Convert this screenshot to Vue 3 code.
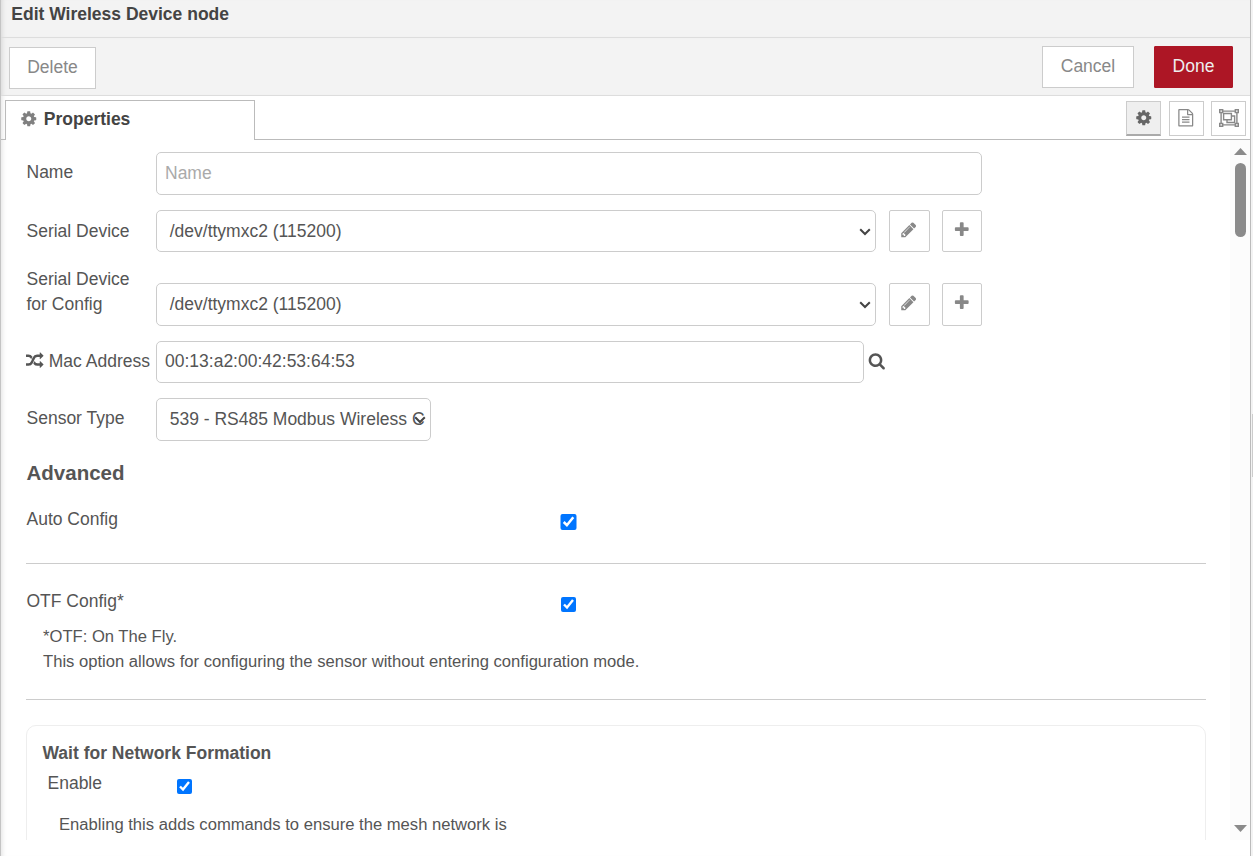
<script setup>
import { ref } from 'vue'

const paths = {
  cog: 'M1152 896q0-106-75-181t-181-75-181 75-75 181 75 181 181 75 181-75 75-181zm512-109v222q0 12-8 23t-20 13l-185 28q-19 54-39 91 35 50 107 138 10 12 10 25t-9 23q-27 37-99 108t-94 71q-12 0-26-9l-138-108q-44 23-91 38-16 136-29 186-7 28-36 28h-222q-14 0-24.5-8.5t-11.5-21.5l-28-184q-49-16-90-37l-141 107q-10 9-25 9-14 0-25-11-126-114-165-168-7-10-7-23 0-12 8-23 15-21 51-66.5t54-70.5q-27-50-41-99l-183-27q-13-2-21-12.5t-8-23.5v-222q0-12 8-23t19-13l186-28q14-46 39-92-40-57-107-138-10-12-10-24 0-10 9-23 26-36 98.5-107.5t94.500-71.500q13 0 26 10l138 107q44-23 91-38 16-136 29-186 7-28 36-28h222q14 0 24.500 8.500t11.500 21.500l28 184q49 16 90 37l142-107q9-9 24-9 13 0 25 10 129 119 165 170 7 8 7 22 0 12-8 23-15 21-51 66.500t-54 70.500q26 50 41 98l183 28q13 2 21 12.500t8 23.500z',
  pencil: 'M491 1536l91-91-235-235-91 91v107h128v128h107zm523-928q0-22-22-22-10 0-17 7l-542 542q-7 7-7 17 0 22 22 22 10 0 17-7l542-542q7-7 7-17zm-54-192l416 416-832 832h-416v-416zm683 96q0 53-37 90l-166 166-416-416 166-165q36-38 90-38 53 0 91 38l235 234q37 39 37 91z',
  plus: 'M1600 736v192q0 40-28 68t-68 28h-416v416q0 40-28 68t-68 28h-192q-40 0-68-28t-28-68v-416h-416q-40 0-68-28t-28-68v-192q0-40 28-68t68-28h416v-416q0-40 28-68t68-28h192q40 0 68 28t28 68v416h416q40 0 68 28t28 68z',
  search: 'M1216 832q0-185-131.5-316.5t-316.5-131.5-316.5 131.5-131.5 316.5 131.5 316.5 316.5 131.5 316.5-131.5 131.5-316.5zm512 832q0 52-38 90t-90 38q-54 0-90-38l-343-342q-179 124-399 124-143 0-273.5-55.5t-225-150-150-225-55.500-273.500 55.500-273.500 150-225 225-150 273.500-55.500 273.500 55.500 225 150 150 225 55.500 273.500q0 220-124 399l343 343q37 37 37 90z',
  random: 'M666 481q-60 92-137 273-22-45-37-72.5t-40.500-63.500-51-56.500-63-35-81.500-14.500h-224q-14 0-23-9t-9-23v-192q0-14 9-23t23-9h224q250 0 410 225zm1126 799q0 14-9 23l-320 320q-9 9-23 9-13 0-22.500-9.500t-9.500-22.500v-192q-32 0-85 .5t-81 1-73-1-71-5-64-10.500-63-18.500-58-28.500-59-40-55-53.500-56-69.500q59-93 136-273 22 45 37 72.500t40.500 63.500 51 56.500 63 35 81.500 14.500h256v-192q0-14 9-23t23-9q12 0 24 10l319 319q9 9 9 23zm0-896q0 14-9 23l-320 320q-9 9-23 9-13 0-22.500-9.500t-9.500-22.500v-192h-256q-48 0-87 15t-69 45-51 61.500-45 77.500q-32 62-78 171-29 66-49.500 111t-54 105-64 100-74 83-90 68.500-106.500 42-128 16.500h-224q-14 0-23-9t-9-23v-192q0-14 9-23t23-9h224q48 0 87-15t69-45 51-61.500 45-77.500q32-62 78-171 29-66 49.500-111t54-105 64-100 74-83 90-68.500 106.500-42 128-16.500h256v-192q0-14 9-23t23-9q12 0 24 10l319 319q9 9 9 23z',
  file: 'M1596 380q28 28 48 76t20 88v1152q0 40-28 68t-68 28h-1344q-40 0-68-28t-28-68v-1600q0-40 28-68t68-28h896q40 0 88 20t76 48zm-444-244v376h376q-10-29-22-41l-313-313q-12-12-41-22zm384 1528v-1024h-416q-40 0-68-28t-28-68v-416h-768v1536h1280zm-1024-864q0-14 9-23t23-9h704q14 0 23 9t9 23v64q0 14-9 23t-23 9h-704q-14 0-23-9t-9-23v-64zm736 224q14 0 23 9t9 23v64q0 14-9 23t-23 9h-704q-14 0-23-9t-9-23v-64q0-14 9-23t23-9h704zm0 256q14 0 23 9t9 23v64q0 14-9 23t-23 9h-704q-14 0-23-9t-9-23v-64q0-14 9-23t23-9h704z'
}

const name = ref('')
const mac = ref('00:13:a2:00:42:53:64:53')
const autoConfig = ref(true)
const otfConfig = ref(true)
const waitForNetwork = ref(true)
const serialRows = [
  { label: ['Serial Device'], value: '/dev/ttymxc2 (115200)', cls: 'serial' },
  { label: ['Serial Device', 'for Config'], value: '/dev/ttymxc2 (115200)', cls: 'serial-config' }
]
</script>

<template>
  <div class="workspace">
    <section class="tray">
      <header class="title">Edit Wireless Device node</header>
      <div class="toolbar">
        <button class="btn delete">Delete</button>
        <button class="btn cancel">Cancel</button>
        <button class="btn done">Done</button>
      </div>
      <div class="tabs">
        <div class="tab-lead"></div>
        <div class="tab">
          <svg class="fa" viewBox="0 0 1792 1792"><path :d="paths.cog" /></svg>
          <span>Properties</span>
        </div>
        <div class="tab-rest">
          <button class="tool active"><svg class="fa" viewBox="0 0 1792 1792"><path :d="paths.cog" /></svg></button>
          <button class="tool"><svg class="fa file-icon" viewBox="0 0 1792 1792"><path :d="paths.file" /></svg></button>
          <button class="tool">
            <svg class="group-icon" viewBox="0 0 20 18" fill="none" stroke="currentColor" stroke-width="1.4">
              <path d="M4 2.100H16M4 15.900H16M2.100 4V14M17.900 4V14" />
              <path d="M.7.700H3.700V3.500H.700ZM16.300.700H19.300V3.500H16.300ZM.700 14.500H3.700V17.300H.700ZM16.300 14.500H19.300V17.300H16.300Z" />
              <path d="M4.600 4.500H12.400V10.800H4.600ZM12.400 7H15.600V13.500H8V10.800" />
            </svg>
          </button>
        </div>
      </div>

      <div class="body">
        <div class="form">
          <div class="row name-row">
            <label>Name</label>
            <input v-model="name" class="text wide" type="text" placeholder="Name" />
          </div>
          <div v-for="row in serialRows" :key="row.cls" class="row" :class="row.cls">
            <label><span v-for="line in row.label" :key="line">{{ line }}</span></label>
            <div class="select">
              <span>{{ row.value }}</span>
              <svg class="chevron" viewBox="0 0 12 8"><path d="M1.200 1.200 6 6 10.800 1.200" /></svg>
            </div>
            <button class="square edit"><svg class="fa" viewBox="0 0 1792 1792"><path :d="paths.pencil" /></svg></button>
            <button class="square add"><svg class="fa" viewBox="0 0 1792 1792"><path :d="paths.plus" /></svg></button>
          </div>
          <div class="row mac-row">
            <label class="with-icon"><svg class="fa" viewBox="0 0 1792 1792"><path :d="paths.random" /></svg>Mac Address</label>
            <input v-model="mac" class="text" type="text" />
            <svg class="fa search" viewBox="0 0 1792 1792"><path :d="paths.search" /></svg>
          </div>
          <div class="row sensor">
            <label>Sensor Type</label>
            <div class="select">
              <span>539 - RS485 Modbus Wireless C</span>
              <svg class="chevron" viewBox="0 0 12 8"><path d="M1.200 1.200 6 6 10.800 1.200" /></svg>
            </div>
          </div>

          <h3>Advanced</h3>
          <div class="option auto">
            <label>Auto Config</label>
            <input v-model="autoConfig" type="checkbox" />
          </div>
          <div class="option otf">
            <label>OTF Config*</label>
            <input v-model="otfConfig" type="checkbox" />
            <p>*OTF: On The Fly.<br />This option allows for configuring the sensor without entering configuration mode.</p>
          </div>
          <div class="card">
            <h4>Wait for Network Formation</h4>
            <div class="enable">
              <label>Enable</label>
              <input v-model="waitForNetwork" type="checkbox" />
            </div>
            <p>Enabling this adds commands to ensure the mesh network is</p>
          </div>
        </div>
        <div class="scrollbar">
          <svg width="13" height="7" viewBox="0 0 13 7"><path d="M6.500 0 13 7H0Z" /></svg>
          <div class="thumb"></div>
          <svg class="down" width="13" height="7" viewBox="0 0 13 7"><path d="M0 0H13L6.500 7Z" /></svg>
        </div>
      </div>
    </section>
    <aside class="edge"><div class="handle"></div></aside>
  </div>
</template>

<style>
body {
  margin: 0;
  overflow: hidden;
}
</style>

<style scoped>
* {
  box-sizing: border-box;
}
.workspace {
  display: flex;
  width: 1253px;
  height: 856px;
  font: 17.5px/25px "Liberation Sans", Arial, sans-serif;
  color: #555;
  background: #fff;
}
button,
input {
  font: inherit;
  margin: 0;
  padding: 0;
}
.fa {
  width: 17.5px;
  height: 17.5px;
  fill: currentColor;
  flex: none;
  display: block;
  overflow: visible;
}
.tray {
  width: 1251px;
  flex: none;
  border-left: 1px solid #c4c4c4;
  border-right: 1px solid #bbb;
  box-shadow: inset 5px 0 5px -4px rgba(0, 0, 0, 0.12);
  overflow: hidden;
}
.edge {
  width: 2px;
  background: #f3f3f3;
  padding-top: 414px;
}
.handle {
  height: 63px;
  margin-left: 1px;
  background: #ccc;
}
.title {
  height: 38px;
  padding: 2px 0 0 10.3px;
  border-bottom: 1px solid #ddd;
  background: #f3f3f3;
  color: #444;
  font-weight: bold;
}
.toolbar {
  height: 58px;
  display: flex;
  align-items: flex-start;
  padding: 8px 17px 0 8px;
  border-bottom: 1px solid #ddd;
  background: #f3f3f3;
}
.btn {
  height: 42px;
  padding-bottom: 2px;
  border: 1px solid #ccc;
  background: #fff;
  color: #888;
}
.delete {
  width: 87px;
  margin: 1px auto 0 0;
}
.cancel {
  width: 92px;
  margin-right: 20px;
}
.done {
  width: 79px;
  border-color: #ad1625;
  border-radius: 1px;
  background: #ad1625;
  color: #eee;
}
.title,
.toolbar {
  box-shadow: inset 5px 0 5px -4px rgba(0, 0, 0, 0.12);
}
.tabs {
  display: flex;
  height: 44px;
}
.tab-lead {
  width: 4px;
  border-bottom: 1px solid #bbb;
}
.tab {
  display: flex;
  align-items: center;
  gap: 6.3px;
  width: 250px;
  margin-top: 4px;
  padding: 0 0 2px 14px;
  border: 1px solid #bbb;
  border-bottom: 0;
  color: #444;
  font-weight: bold;
}
.tab .fa {
  color: #808080;
  margin-bottom: 1px;
}
.tab-rest {
  flex: 1;
  display: flex;
  justify-content: flex-end;
  padding: 5px 4px 0 0;
  border-bottom: 1px solid #bbb;
}
.tool {
  display: flex;
  align-items: center;
  justify-content: center;
  width: 35px;
  height: 35px;
  padding-bottom: 1px;
  border: 1px solid #ccc;
  background: #fff;
  color: #888;
}
.tool + .tool {
  margin-left: 7px;
}
.tool.active {
  margin-right: 1px;
  padding-bottom: 0;
  background: #efefef;
  border-bottom: 2px solid #aaa;
  color: #666;
}
.group-icon {
  width: 20px;
  height: 18px;
  flex: none;
}
.file-icon {
  margin-right: 1px;
}
.body {
  display: flex;
  height: 700px;
  overflow: hidden;
}
.form {
  width: 1205px;
  padding: 12px 0 0 25px;
  flex: none;
}
.row {
  display: flex;
  align-items: flex-end;
  margin-bottom: 15px;
}
.row label {
  width: 130px;
  flex: none;
  align-self: flex-start;
  padding-left: 0.5px;
  white-space: nowrap;
}
.row label span {
  display: block;
}
.name-row label {
  margin-top: 8px;
}
.serial label {
  margin-top: 9px;
}
.mac-row label {
  margin-top: 8px;
}
.sensor label {
  margin-top: 8px;
}
.row .with-icon {
  display: flex;
  gap: 4.8px;
}
.with-icon .fa {
  margin: 3px 0.5px 0 -0.5px;
}
.text,
.select {
  border: 1px solid #ccc;
  border-radius: 5px;
  background: #fff;
  color: #555;
}
.text {
  width: 708px;
  height: 42px;
  padding: 0 8px 2px;
}
.text.wide {
  width: 826px;
  height: 43px;
  padding-bottom: 0;
}
.text::placeholder {
  color: #aaa;
}
.select {
  position: relative;
  width: 720px;
  height: 42px;
  padding: 8px 0 0 12.7px;
}
.select span {
  display: block;
  white-space: nowrap;
}
.chevron {
  position: absolute;
  right: 4px;
  top: 17px;
  width: 12px;
  height: 8px;
  fill: none;
  stroke: #444;
  stroke-width: 2;
}
.serial-config {
  height: 59px;
}
.serial-config .select,
.serial-config .square {
  height: 43px;
}
.square {
  display: flex;
  align-items: center;
  justify-content: center;
  width: 41px;
  height: 42px;
  margin-left: 13px;
  border: 1px solid #ccc;
  border-radius: 2px;
  background: #fff;
  color: #888;
}
.square.add {
  width: 40px;
  margin-left: 12px;
}
.square .fa {
  margin: 0 1px 2px 0;
}
.square.add .fa {
  margin-right: 0;
}
.serial-config .square .fa {
  margin-bottom: 3px;
}
.search {
  align-self: flex-start;
  margin: 11px 0 0 4px;
}
.sensor .select {
  width: 275px;
  height: 43px;
}
h3 {
  margin: 19px 0 22px 0.5px;
  font-size: 20.5px;
  line-height: 25px;
}
.option {
  display: grid;
  grid-template-columns: 534px 1fr;
  grid-template-rows: 25px auto;
  align-items: start;
  padding-left: 0.5px;
  border-bottom: 1px solid #ccc;
}
.auto {
  height: 57px;
}
.otf {
  height: 136px;
  padding-top: 25px;
}
input[type="checkbox"] {
  width: 15px;
  height: 15px;
  accent-color: #0075ff;
}
.auto input[type="checkbox"] {
  width: 16.5px;
  height: 16.5px;
  margin: 6.6px 0 0 -0.5px;
}
.otf input {
  margin: 8px 0 0 0.5px;
}
p {
  margin: 0;
  font-size: 16.62px;
}
.otf p {
  grid-column: 1 / -1;
  padding: 10px 0 0 16.5px;
}
.card {
  height: 200px;
  margin-top: 25px;
  padding: 15px;
  border: 1px solid #eee;
  border-radius: 10px;
}
h4 {
  margin: 0 0 5px;
  padding-left: 0.5px;
  font-size: 17.5px;
}
.enable {
  display: flex;
  padding-left: 5.5px;
}
.enable label {
  width: 129.6px;
}
.enable input {
  margin-top: 8px;
}
.card p {
  margin: 16px 0 0 17px;
}
.scrollbar {
  display: flex;
  flex-direction: column;
  align-items: center;
  width: 20px;
  margin-left: auto;
  padding: 8px 0;
  background: #fcfcfc;
}
.scrollbar svg {
  fill: #8b8b8b;
  flex: none;
}
.thumb {
  width: 11px;
  height: 74px;
  margin-top: 8px;
  border-radius: 6px;
  background: #8b8b8b;
}
.down {
  margin-top: auto;
}
</style>
